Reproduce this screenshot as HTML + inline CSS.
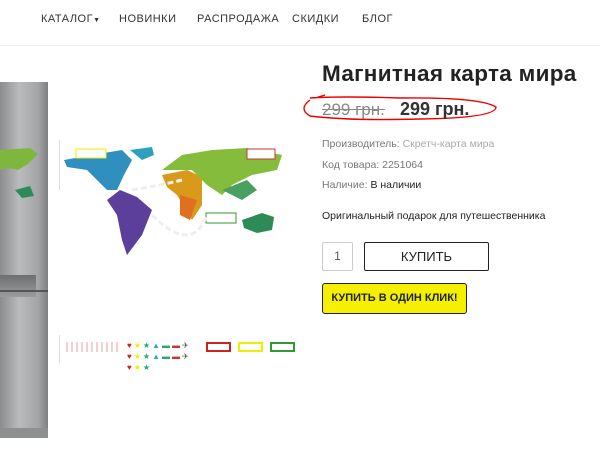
<!DOCTYPE html>
<html><head><meta charset="utf-8"><style>
body{margin:0;width:600px;height:450px;overflow:hidden;background:#fff;font-family:"Liberation Sans",sans-serif;position:relative}
.nav{position:absolute;top:0;left:0;width:600px;height:45px;border-bottom:1px solid #eee}
.nav span{position:absolute;top:13px;font-size:11px;letter-spacing:.5px;color:#333}
.a{position:absolute}
</style></head><body>
<div class="nav">
<span style="left:41px">КАТАЛОГ<small style="font-size:7px">▼</small></span>
<span style="left:119px">НОВИНКИ</span>
<span style="left:197px">РАСПРОДАЖА</span>
<span style="left:292px">СКИДКИ</span>
<span style="left:362px">БЛОГ</span>
</div>
<div class="a" style="left:0;top:82px;width:48px;height:356px;background:linear-gradient(90deg,#8a8c8e,#b9bbbd 40%,#a2a4a6 80%,#7d7f81)"></div>
<div class="a" style="left:0;top:275px;width:36px;height:22px;background:linear-gradient(#6d6f71,#9a9c9e)"></div>
<div class="a" style="left:0;top:290px;width:48px;height:2px;background:#555"></div>
<div class="a" style="left:0;top:428px;width:48px;height:10px;background:#8d8f91"></div>
<svg class="a" style="left:0;top:140px" width="45" height="70"><path d="M0 10 L30 8 L38 14 L28 24 L18 30 L8 28 L0 30Z" fill="#7fb73e"/><path d="M15 50 L30 46 L34 56 L22 58Z" fill="#2e8b57"/></svg>
<div class="a" style="left:59px;top:140px;width:1px;height:50px;background:#ddd"></div>
<svg class="a" style="left:62px;top:145px" width="230" height="110">
<path d="M2 15 L30 10 L60 5 L70 15 L62 30 L55 45 L45 45 L35 35 L25 25 L5 22Z" fill="#2f8fbf"/>
<path d="M68 5 L90 2 L92 10 L80 15Z" fill="#2f9fbf"/>
<path d="M58 45 L75 52 L90 65 L80 90 L65 110 L60 95 L55 70 L45 55Z" fill="#5b3f9a"/>
<path d="M100 30 L125 25 L140 32 L140 60 L130 75 L115 50 L105 42Z" fill="#d89a1a"/>
<path d="M118 50 L135 55 L128 75 L118 70Z" fill="#e07020"/>
<path d="M100 25 L120 10 L150 5 L185 3 L220 10 L215 25 L190 30 L170 40 L160 50 L145 40 L130 25Z" fill="#86bc3c"/>
<path d="M160 45 L185 35 L195 45 L180 55Z" fill="#4aa060"/>
<path d="M180 75 L200 68 L212 72 L210 85 L195 88 L182 83Z" fill="#2e8b57"/>
<rect x="14" y="4" width="30" height="9" fill="#fff" stroke="#ee0" />
<rect x="185" y="4" width="28" height="10" fill="#fff" stroke="#c33"/>
<rect x="144" y="68" width="30" height="10" fill="#fff" stroke="#393"/>
<path d="M70 45 Q100 40 120 35 M90 70 Q130 110 145 70" stroke="#eee" stroke-width="3" fill="none" stroke-dasharray="6 3"/>
</svg>
<div class="a" style="left:59px;top:335px;width:1px;height:28px;background:#ddd"></div>
<div class="a" style="left:66px;top:342px;width:52px;height:10px;background:repeating-linear-gradient(90deg,#f3d0d0 0 2px,#fff 2px 5px)"></div>
<div class="a" style="left:127px;top:340px;font-size:8px;line-height:11px;letter-spacing:2px"><span style="color:#c22">♥</span><span style="color:#ee0">★</span><span style="color:#2a7">★</span><span style="color:#2ad">▲</span><span style="color:#2a7">▬</span><span style="color:#c33">▬</span><span style="color:#555">✈</span><br><span style="color:#c22">♥</span><span style="color:#ee0">★</span><span style="color:#2a7">★</span><span style="color:#2ad">▲</span><span style="color:#2a7">▬</span><span style="color:#c33">▬</span><span style="color:#555">✈</span><br><span style="color:#c22">♥</span><span style="color:#ee0">★</span><span style="color:#2a7">★</span></div>
<div class="a" style="left:206px;top:342px;width:21px;height:6px;border:2px solid #c22"></div>
<div class="a" style="left:238px;top:342px;width:21px;height:6px;border:2px solid #ee0"></div>
<div class="a" style="left:270px;top:342px;width:21px;height:6px;border:2px solid #393"></div>
<div class="a" style="left:322px;top:61px;font-size:22.5px;font-weight:bold;color:#222;letter-spacing:.3px">Магнитная карта мира</div>
<svg class="a" style="left:300px;top:94px" width="200" height="30"><path d="M10 4 Q40 2 100 4 Q180 3 196 13 Q196 24 120 25 Q50 27 10 22 Q-2 15 10 6 M15 4 L25 1" stroke="#e00" stroke-width="1.4" fill="none"/></svg>
<div class="a" style="left:322px;top:100px;font-size:17px;color:#888;text-decoration:line-through">299 грн.</div>
<div class="a" style="left:400px;top:99px;font-size:18px;font-weight:bold;color:#333">299 грн.</div>
<div class="a" style="left:322px;top:138px;font-size:10.5px;color:#777">Производитель: <span style="color:#aaa">Скретч-карта мира</span></div>
<div class="a" style="left:322px;top:159px;font-size:10.5px;color:#777">Код товара: 2251064</div>
<div class="a" style="left:322px;top:179px;font-size:10.5px;color:#777">Наличие: <span style="color:#222">В наличии</span></div>
<div class="a" style="left:322px;top:210px;font-size:10.5px;color:#222">Оригинальный подарок для путешественника</div>
<div class="a" style="left:322px;top:242px;width:29px;height:27px;border:1px solid #ccc;border-radius:2px;font-size:12px;color:#555;text-align:center;line-height:27px">1</div>
<div class="a" style="left:364px;top:242px;width:123px;height:27px;border:1.5px solid #222;border-radius:2px;font-size:13px;color:#222;text-align:center;line-height:27px">КУПИТЬ</div>
<div class="a" style="left:322px;top:283px;width:143px;height:29px;border:1.5px solid #222;border-radius:3px;background:#f5f000;font-size:11px;font-weight:bold;color:#222;text-align:center;line-height:29px">КУПИТЬ В ОДИН КЛИК!</div>
</body></html>
